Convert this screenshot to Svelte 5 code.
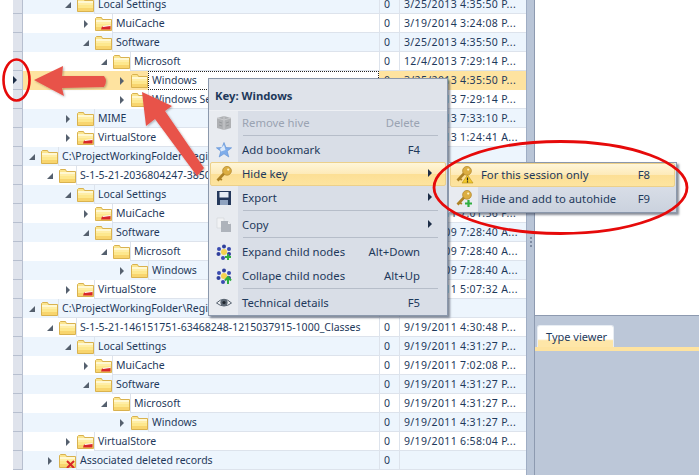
<script>
  const rows = [
    { level: 3, open: true, name: 'Local Settings', value: '0', date: '3/25/2013 4:35:50 P...' },
    { level: 4, kind: 'red', name: 'MuiCache', value: '0', date: '3/19/2014 3:24:08 P...' },
    { level: 4, open: true, name: 'Software', value: '0', date: '3/25/2013 4:35:50 P...' },
    { level: 5, open: true, name: 'Microsoft', value: '0', date: '12/4/2013 7:29:14 P...' },
    { level: 6, name: 'Windows', value: '0', date: '3/25/2013 4:35:50 P...', selected: true },
    { level: 6, name: 'Windows Search', value: '0', date: '12/4/2013 7:29:14 P...' },
    { level: 3, name: 'MIME', value: '0', date: '12/4/2013 7:33:10 P...' },
    { level: 3, kind: 'red', name: 'VirtualStore', value: '0', date: '12/4/2013 1:24:41 A...' },
    { level: 1, open: true, name: 'C:\\ProjectWorkingFolder\\Registry', value: '', date: '' },
    { level: 2, open: true, name: 'S-1-5-21-2036804247-3850', value: '0', date: '9/19/2011 7:01:56 P...' },
    { level: 3, open: true, name: 'Local Settings', value: '0', date: '9/19/2011 7:01:56 P...' },
    { level: 4, kind: 'red', name: 'MuiCache', value: '0', date: '9/19/2011 7:01:56 P...' },
    { level: 4, open: true, name: 'Software', value: '0', date: '9/19/2009 7:28:40 A...' },
    { level: 5, open: true, name: 'Microsoft', value: '0', date: '9/19/2009 7:28:40 A...' },
    { level: 6, name: 'Windows', value: '0', date: '9/19/2009 7:28:40 A...' },
    { level: 3, kind: 'red', name: 'VirtualStore', value: '0', date: '9/19/2011 5:07:32 A...' },
    { level: 1, open: true, name: 'C:\\ProjectWorkingFolder\\Registry', value: '', date: '' },
    { level: 2, open: true, name: 'S-1-5-21-146151751-63468248-1215037915-1000_Classes', value: '0', date: '9/19/2011 4:30:48 P...' },
    { level: 3, open: true, name: 'Local Settings', value: '0', date: '9/19/2011 4:31:27 P...' },
    { level: 4, kind: 'red', name: 'MuiCache', value: '0', date: '9/19/2011 7:02:08 P...' },
    { level: 4, open: true, name: 'Software', value: '0', date: '9/19/2011 4:31:27 P...' },
    { level: 5, open: true, name: 'Microsoft', value: '0', date: '9/19/2011 4:31:27 P...' },
    { level: 6, name: 'Windows', value: '0', date: '9/19/2011 4:31:27 P...' },
    { level: 3, kind: 'red', name: 'VirtualStore', value: '0', date: '9/19/2011 6:58:04 P...' },
    { level: 2, kind: 'deleted', name: 'Associated deleted records', value: '0', date: '' }
  ];
</script>

{#snippet folder(kind)}
  <svg class="folder" width="17" height="14" viewBox="0 0 17 14">
    <path d="M.5 1.5 L.5 13.5 L16.5 13.5 L16.5 2.5 L7.5 2.5 L6.5 .5 L1.5 .5 Z" fill="#fbe58e" stroke="#d9b24f"/>
    <rect x="1" y="3" width="15" height="2" fill="#fff8d2"/>
    <rect x="1" y="5" width="15" height="2" fill="#ffeea6"/>
    <rect x="1" y="7" width="15" height="3" fill="#fde88e"/>
    <rect x="1" y="10" width="15" height="3" fill="#f8d56e"/>
    {#if kind === 'red'}
      <path d="M7 9.5 L15.5 8.5 L15.5 12.5 L6 12.5 Z" fill="#d8262a"/>
      <path d="M8 9 L15.5 8 L15.5 9 L7.5 10 Z" fill="#fff"/>
    {/if}
    {#if kind === 'deleted'}
      <path d="M8 7 L15 14 M15 7 L8 14" stroke="#d8262a" stroke-width="2"/>
    {/if}
  </svg>
{/snippet}

{#snippet key()}
  <path d="M8.5 7 L1.5 14.5" stroke="#ad8226" stroke-width="2.6" fill="none"/>
  <path d="M3.5 12 L5.8 14.2" stroke="#ad8226" stroke-width="1.8" fill="none"/>
  <circle cx="11" cy="4.8" r="4.4" fill="#dcae42" stroke="#ad8226" stroke-width=".7"/>
  <circle cx="12.2" cy="3.6" r="1.1" fill="#fff3c4"/>
{/snippet}

{#snippet cluster()}
  <circle cx="8" cy="2.6" r="2" fill="#2f3f9c"/>
  <circle cx="3" cy="5" r="2" fill="#3a4bb0"/>
  <circle cx="13" cy="5" r="2" fill="#3a4bb0"/>
  <circle cx="2.5" cy="10" r="2" fill="#2f3f9c"/>
  <circle cx="7" cy="14" r="2" fill="#3a4bb0"/>
  <circle cx="8" cy="8" r="3" fill="#f4d24e"/>
{/snippet}

<div class="app">
  <main class="grid">
    {#each rows as row, i}
      <div class="row" class:alt={i % 2 === 0} class:selected={row.selected}>
        <div class="indicator">
          {#if row.selected}<span class="current"></span>{/if}
        </div>
        <div class="tree" style="padding-left: {(row.level - 1) * 18 + 6}px">
          <span class="toggle" class:open={row.open}></span>
          {@render folder(row.kind)}
          <span class="name" class:focus={row.selected}>{row.name}</span>
        </div>
        <div class="value">{row.value}</div>
        <div class="date">{row.date}</div>
      </div>
    {/each}
  </main>

  <div class="splitter"><span class="grip"></span></div>

  <aside class="side">
    <div class="preview"></div>
    <div class="tabs"><span class="tab">Type viewer</span></div>
    <div class="tab-line"></div>
  </aside>

  <svg class="marks" width="699" height="475" viewBox="0 0 699 475">
    <defs>
      <filter id="soft" x="-20%" y="-20%" width="140%" height="140%">
        <feDropShadow dx="1" dy="1" stdDeviation="1" flood-color="#000" flood-opacity=".3"/>
      </filter>
    </defs>
    <path d="M34 80 L63 66 L62 76 L104 76 Q108 81 104 87 L62 88 L64 96 Z" fill="#e8524a" filter="url(#soft)"/>
    <path d="M142 92 L172 106 L165 111 L204 168 L197 176 L155 119 L146 126 Z" fill="#e8524a" filter="url(#soft)"/>
  </svg>

  <div class="menu main-menu">
    <div class="menu-title">Key: Windows</div>
    <div class="item disabled">
      <svg width="16" height="16" viewBox="0 0 16 16"><path d="M1 3 L8 1 L15 3 L15 13 L8 15 L1 13 Z" fill="#a9abae"/><path d="M8 1 L8 15 M1 3 L8 5 L15 3" stroke="#c8c9cb" fill="none"/><path d="M3 7 L6 8 M10 8 L13 7 M3 10 L6 11 M10 11 L13 10" stroke="#8f9194"/></svg>
      <span class="label">Remove hive</span><span class="short">Delete</span>
    </div>
    <div class="sep"></div>
    <div class="item">
      <svg width="16" height="16" viewBox="0 0 16 16"><path d="M8 .5 L10 5.6 L15.6 5.8 L11.2 9.2 L12.8 15 L8 11.8 L3.2 15 L4.8 9.2 L.4 5.8 L6 5.6 Z" fill="#7fadea" stroke="#5b8dd3" stroke-width=".6"/><path d="M8 3 L9.5 8 L5 9.5 L4 7 Z" fill="#dbe9fa"/></svg>
      <span class="label">Add bookmark</span><span class="short">F4</span>
    </div>
    <div class="item hot">
      <svg width="16" height="16" viewBox="0 0 16 16">{@render key()}</svg>
      <span class="label">Hide key</span><span class="more"></span>
    </div>
    <div class="item">
      <svg width="16" height="16" viewBox="0 0 16 16"><path d="M1 1 L15 1 L15 15 L1 15 Z" fill="#25395c"/><rect x="3.5" y="2" width="9" height="5.5" fill="#e8eef6"/><rect x="4" y="10" width="8" height="5" fill="#8fa3c0"/></svg>
      <span class="label">Export</span><span class="more"></span>
    </div>
    <div class="sep"></div>
    <div class="item">
      <svg width="16" height="16" viewBox="0 0 16 16"><path d="M1 1 L8 1 L8 11 L1 11 Z" fill="#f1f2f4" stroke="#d2d4d8" stroke-width=".6"/><path d="M5 4 L12 4 L15 7 L15 15 L5 15 Z" fill="#aeb3bb"/><path d="M12 4 L12 7 L15 7 Z" fill="#f1f2f4"/></svg>
      <span class="label">Copy</span><span class="more"></span>
    </div>
    <div class="sep"></div>
    <div class="item">
      <svg width="16" height="16" viewBox="0 0 16 16">{@render cluster()}<circle cx="13" cy="10" r="2" fill="#2f3f9c"/><path d="M12 10 L12 16 M9 13 L15 13" stroke="#2fae3f" stroke-width="2"/></svg>
      <span class="label">Expand child nodes</span><span class="short">Alt+Down</span>
    </div>
    <div class="item">
      <svg width="16" height="16" viewBox="0 0 16 16">{@render cluster()}<circle cx="13" cy="10" r="2" fill="#2f3f9c"/><path d="M12 16 L12 11 M9 12.5 L12 9 L15 12.5" stroke="#2fae3f" stroke-width="2" fill="none"/></svg>
      <span class="label">Collape child nodes</span><span class="short">Alt+Up</span>
    </div>
    <div class="sep"></div>
    <div class="item">
      <svg width="16" height="16" viewBox="0 0 16 16"><path d="M.5 8 Q8 .5 15.5 8 Q8 14 .5 8 Z" fill="#eef0f3" stroke="#55606e"/><circle cx="8" cy="7.5" r="3.6" fill="#5c6672"/><circle cx="8" cy="7.5" r="1.6" fill="#20262e"/></svg>
      <span class="label">Technical details</span><span class="short">F5</span>
    </div>
  </div>

  <div class="menu sub-menu">
    <div class="item hot">
      <svg width="18" height="18" viewBox="0 0 18 18">{@render key()}<path d="M11.5 9 L17 17 L6 17 Z" fill="#f3c92c" stroke="#b58e16" stroke-width=".6"/><path d="M11.5 11.5 L11.5 14.5 M11.5 15.3 L11.5 16.4" stroke="#222" stroke-width="1.2"/></svg>
      <span class="label">For this session only</span><span class="short">F8</span>
    </div>
    <div class="item">
      <svg width="18" height="18" viewBox="0 0 18 18">{@render key()}<path d="M12.5 10 L12.5 17 M9 13.5 L16 13.5" stroke="#2fae3f" stroke-width="2.2"/></svg>
      <span class="label">Hide and add to autohide</span><span class="short">F9</span>
    </div>
  </div>

  <svg class="marks" width="699" height="475" viewBox="0 0 699 475">
    <ellipse cx="16.5" cy="80" rx="13" ry="20.5" fill="none" stroke="#e60a0a" stroke-width="2.6"/>
    <ellipse cx="560.5" cy="187.5" rx="126.5" ry="46" fill="none" stroke="#e60a0a" stroke-width="2.8"/>
  </svg>
</div>

<style>
  :global(body) {
    margin: 0;
    background: #fff;
  }

  .app {
    position: relative;
    width: 699px;
    height: 475px;
    overflow: hidden;
    display: flex;
    font-family: "Noto Sans", "Open Sans", sans-serif;
    font-size: 10.5px;
    color: #1e395b;
    background: #fff;
  }

  .grid {
    width: 513px;
    margin: -5px 0 0 13px;
    flex: none;
  }

  .row {
    display: flex;
    height: 19px;
    line-height: 18px;
    white-space: nowrap;
    background: #fff;
  }
  .row.alt { background: #edf5fd; }
  .row.selected { background: #fee3a0; }

  .indicator {
    position: relative;
    width: 10px;
    flex: none;
    box-sizing: border-box;
    background: #dfe3ec;
    border-right: 1px solid #b7bfcf;
    border-bottom: 1px solid #b7bfcf;
  }
  .current {
    position: absolute;
    left: 0;
    top: 5px;
    border-left: 4px solid #1c2c46;
    border-top: 4px solid transparent;
    border-bottom: 4px solid transparent;
  }

  .tree {
    width: 356px;
    flex: none;
    display: flex;
    box-sizing: border-box;
    overflow: hidden;
  }
  .toggle {
    width: 12px;
    flex: none;
    position: relative;
  }
  .toggle::after {
    content: "";
    position: absolute;
    left: 1px;
    top: 6px;
    border-left: 4px solid #55606e;
    border-top: 4px solid transparent;
    border-bottom: 4px solid transparent;
  }
  .toggle.open::after {
    top: 7px;
    left: 0;
    border: 0;
    width: 0;
    height: 0;
    border-bottom: 6px solid #55606e;
    border-left: 6px solid transparent;
  }
  .folder {
    flex: none;
    width: 17px;
    height: 14px;
    margin-top: 3px;
  }

  .name {
    flex: 1;
    min-width: 0;
    padding-left: 3px;
    border-left: 1px solid #dde3ec;
    border-bottom: 1px solid #dde3ec;
    overflow: hidden;
  }
  .selected .name {
    border-bottom-color: transparent;
  }
  .name.focus {
    background: #fff;
    outline: 1px dotted #222;
    outline-offset: -1px;
    border: 0;
    padding-left: 4px;
  }

  .value, .date {
    flex: none;
    box-sizing: border-box;
    border-left: 1px solid #dde3ec;
    border-bottom: 1px solid #dde3ec;
    padding-left: 4px;
  }
  .value { width: 20px; }
  .date {
    width: 127px;
    letter-spacing: .35px;
    overflow: hidden;
  }
  .selected .value, .selected .date { border-color: transparent; }

  .splitter {
    position: relative;
    width: 9px;
    flex: none;
    box-sizing: border-box;
    background: #b9c5d7;
    border-left: 1px solid #9fadc4;
    border-right: 1px solid #8d9ab0;
  }
  .grip {
    position: absolute;
    left: 3px;
    top: 237px;
    width: 2px;
    height: 10px;
    background: repeating-linear-gradient(#7f8ca3 0 2px, transparent 2px 4px);
  }

  .side {
    flex: 1;
    display: flex;
    flex-direction: column;
    background: #bcc7d8;
  }
  .preview {
    height: 316px;
    background: #fff;
    border-bottom: 1px solid #8d9ab0;
    box-sizing: border-box;
    flex: none;
  }
  .tabs {
    display: flex;
    padding: 9px 0 0 2px;
  }
  .tab {
    width: 77px;
    height: 22px;
    box-sizing: border-box;
    padding-left: 8px;
    font-size: 11px;
    line-height: 21px;
    border-radius: 3px 3px 0 0;
    border: 1px solid #e8edf3;
    border-bottom: 0;
    background: linear-gradient(#fff 0 62%, #fee6a8 70%);
  }
  .tab-line {
    height: 4px;
    background: #fee3a0;
  }

  .marks {
    position: absolute;
    left: 0;
    top: 0;
    pointer-events: none;
  }

  .menu {
    position: absolute;
    box-sizing: border-box;
    border: 1px solid #8b98ac;
    box-shadow: 2px 2px 2px rgba(40, 50, 70, .55);
    background: linear-gradient(90deg, #e8ebf0 0 29px, #d9dee7 29px);
    font-size: 11.3px;
  }
  .main-menu {
    left: 208px;
    top: 78px;
    width: 240px;
    height: 238px;
  }
  .sub-menu {
    left: 448px;
    top: 162px;
    width: 229px;
    height: 51px;
    background: linear-gradient(90deg, #e8ebf0 0 29px, transparent 29px), linear-gradient(#e4e8ef, #cbd2de);
  }
  .menu-title {
    height: 32px;
    box-sizing: border-box;
    padding: 9px 0 0 6px;
    background: #dfe3ea;
    border-bottom: 1px solid #eef0f4;
    font-weight: 700;
    line-height: 16px;
  }

  .item {
    display: flex;
    align-items: center;
    height: 24px;
    box-sizing: border-box;
    padding: 0 25px 2px 5px;
    border: 1px solid transparent;
    margin: 0 1px;
    border-radius: 2px;
  }
  .item svg {
    flex: none;
    margin: 2px 10px 0 0;
  }
  .item .label { flex: 1; }
  .item.hot {
    background: linear-gradient(#fff6d9, #fdeab8 50%, #fcdf95 52%, #fde49f);
    border-color: #ecd08a;
  }
  .item.disabled { color: #9aa3b2; }
  .item.disabled svg { opacity: .9; }
  .more {
    position: relative;
    left: 12px;
    border-left: 4px solid #1c2c46;
    border-top: 4px solid transparent;
    border-bottom: 4px solid transparent;
  }
  .sep {
    height: 3px;
    box-sizing: border-box;
    margin-left: 34px;
    margin-right: 9px;
    border-top: 1px solid #b6bdc9;
  }
  .sub-menu .item { padding: 0 24px 2px 5px; }
  .sub-menu .item svg { margin: 2px 7px 0 0; }
</style>
